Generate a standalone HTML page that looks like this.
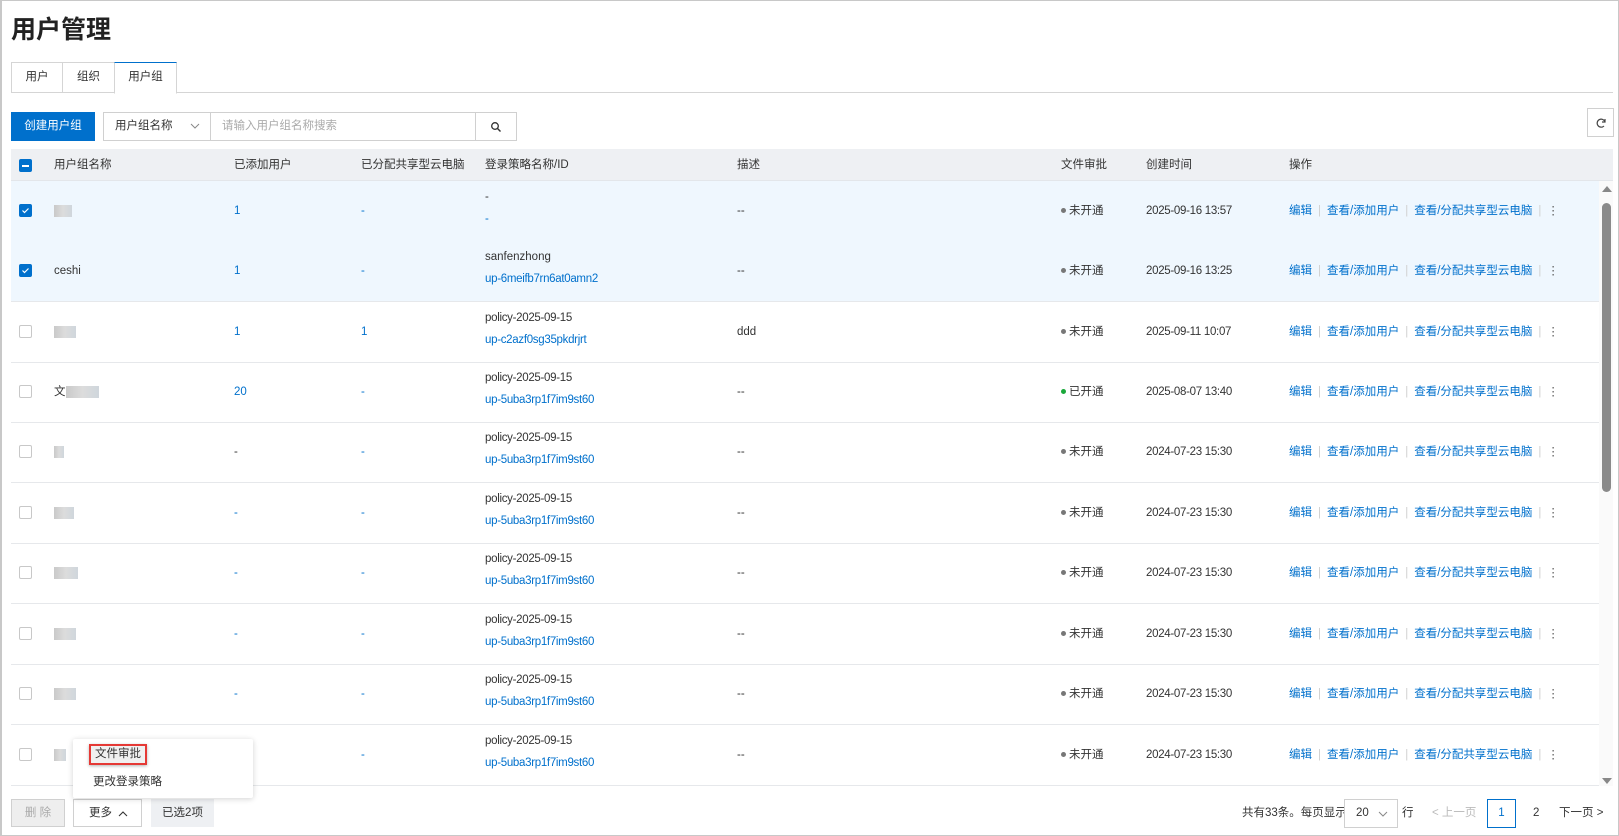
<!DOCTYPE html>
<html><head><meta charset="utf-8"><style>
*{box-sizing:border-box;margin:0;padding:0}
body{width:1619px;height:836px;overflow:hidden;background:#fff;font-family:"Liberation Sans","Noto Sans CJK SC",sans-serif;font-size:11.5px;color:#333;position:relative}
.frame{position:absolute;left:0;top:0;width:1619px;height:836px;border:1px solid #c8c8c8;border-left:2px solid #c8c8c8}
.a{position:absolute;white-space:nowrap;line-height:14px}
.title{left:11px;top:14px;font-size:25px;line-height:32px;font-weight:bold;color:#222}
.tab{position:absolute;top:62px;height:31px;border:1px solid #d5d5d5;line-height:29px;text-align:center;background:#fff}
.tabline{position:absolute;left:11px;right:6px;top:92px;height:1px;background:#d5d5d5}
.btn{position:absolute;border:1px solid #d0d0d0;line-height:26px;text-align:center;background:#fff}
.hdr{position:absolute;left:11px;top:149px;width:1602px;height:32px;background:#eef0f3;border-bottom:1px solid #e3e6ea}
.row{position:absolute;left:11px;width:1588px;height:61px;border-bottom:1px solid #e6e8eb}
.row.sel{background:#eff7fe}
.row .a{top:23px}
.d{letter-spacing:-0.3px}
.cb{position:absolute;left:8px;top:23px;width:13px;height:13px;border:1px solid #c8c8c8;border-radius:2px;background:#fff}
.cb.on{background:#0070cc;border-color:#0070cc}
.blue{color:#0070cc}
.blur{position:absolute;top:24px;height:12px;background:linear-gradient(90deg,#c9c9c9,#dcdcdc,#cfd6dc)}
.p1{top:9px!important}.p2{top:31px!important}
.dot{display:inline-block;width:5px;height:5px;border-radius:50%;background:#777;margin-right:3px;vertical-align:1px}
.sep{color:#d0d0d0;margin:0 6px}
</style></head><body>
<div class="frame"></div>
<div class="a title">用户管理</div>
<div class="tab" style="left:11px;width:52px">用户</div>
<div class="tab" style="left:62px;width:53px">组织</div>
<div class="tabline"></div>
<div class="tab" style="left:114px;width:63px;border-top:1px solid #0070cc;border-bottom-color:#fff;height:32px;z-index:2">用户组</div>

<div class="btn" style="left:11px;top:112px;width:84px;height:29px;background:#0070cc;border-color:#0070cc;color:#fff">创建用户组</div>
<div class="btn" style="left:103px;top:112px;width:108px;height:29px;text-align:left;padding-left:11px">用户组名称<svg style="position:absolute;left:86px;top:10px" width="10" height="7" viewBox="0 0 10 7"><path d="M1 1L5 5L9 1" fill="none" stroke="#888" stroke-width="1"/></svg></div>
<div class="btn" style="left:210px;top:112px;width:266px;height:29px;text-align:left;padding-left:11px;color:#aaa">请输入用户组名称搜索</div>
<div class="btn" style="left:475px;top:112px;width:42px;height:29px"><svg width="12" height="12" viewBox="0 0 12 12" style="margin-top:8px"><circle cx="5" cy="5" r="3.3" fill="none" stroke="#333" stroke-width="1.3"/><path d="M7.5 7.5L10.5 10.5" stroke="#333" stroke-width="1.4"/></svg></div>
<div class="btn" style="left:1587px;top:108px;width:27px;height:29px"><svg width="12" height="12" viewBox="0 0 12 12" style="margin-top:8px"><path d="M10 5A4 4 0 1 0 9 9" fill="none" stroke="#444" stroke-width="1.2"/><path d="M10 2V5H7" fill="none" stroke="#444" stroke-width="1.2"/></svg></div>

<div class="hdr">
<div class="cb on" style="top:10px"><div style="position:absolute;left:2px;top:5px;width:7px;height:2px;background:#fff"></div></div>
<div class="a" style="left:43px;top:9px">用户组名称</div>
<div class="a" style="left:223px;top:9px">已添加用户</div>
<div class="a" style="left:350px;top:9px">已分配共享型云电脑</div>
<div class="a" style="left:474px;top:9px">登录策略名称/ID</div>
<div class="a" style="left:726px;top:9px">描述</div>
<div class="a" style="left:1050px;top:9px">文件审批</div>
<div class="a" style="left:1135px;top:9px">创建时间</div>
<div class="a" style="left:1278px;top:9px">操作</div>
</div>

<div class="row sel" style="top:181px">
<div class="cb on"><svg width="11" height="11" viewBox="0 0 11 11"><path d="M2.5 5.5L4.5 7.5L8.5 3.5" fill="none" stroke="#fff" stroke-width="1.2"/></svg></div>
<div class="blur" style="left:43px;width:18px"></div>
<div class="a blue" style="left:223px">1</div><div class="a blue" style="left:350px">-</div>
<div class="a p1" style="left:474px">-</div><div class="a p2 blue" style="left:474px">-</div>
<div class="a" style="left:726px">--</div>
<div class="a" style="left:1050px"><span class="dot"></span>未开通</div>
<div class="a d" style="left:1135px">2025-09-16 13:57</div>
<div class="a blue" style="left:1278px">编辑<span class="sep">|</span>查看/添加用户<span class="sep">|</span>查看/分配共享型云电脑<span class="sep">|</span><span style="color:#555">⋮</span></div>
</div>
<div class="row sel" style="top:241px">
<div class="cb on"><svg width="11" height="11" viewBox="0 0 11 11"><path d="M2.5 5.5L4.5 7.5L8.5 3.5" fill="none" stroke="#fff" stroke-width="1.2"/></svg></div>
<div class="a" style="left:43px">ceshi</div>
<div class="a blue" style="left:223px">1</div><div class="a blue" style="left:350px">-</div>
<div class="a p1" style="left:474px">sanfenzhong</div><div class="a p2 blue d" style="left:474px">up-6meifb7rn6at0amn2</div>
<div class="a" style="left:726px">--</div>
<div class="a" style="left:1050px"><span class="dot"></span>未开通</div>
<div class="a d" style="left:1135px">2025-09-16 13:25</div>
<div class="a blue" style="left:1278px">编辑<span class="sep">|</span>查看/添加用户<span class="sep">|</span>查看/分配共享型云电脑<span class="sep">|</span><span style="color:#555">⋮</span></div>
</div>
<div class="row" style="top:302px">
<div class="cb"></div><div class="blur" style="left:43px;width:22px"></div>
<div class="a blue" style="left:223px">1</div><div class="a blue" style="left:350px">1</div>
<div class="a p1 d" style="left:474px">policy-2025-09-15</div><div class="a p2 blue d" style="left:474px">up-c2azf0sg35pkdrjrt</div>
<div class="a" style="left:726px">ddd</div>
<div class="a" style="left:1050px"><span class="dot"></span>未开通</div>
<div class="a d" style="left:1135px">2025-09-11 10:07</div>
<div class="a blue" style="left:1278px">编辑<span class="sep">|</span>查看/添加用户<span class="sep">|</span>查看/分配共享型云电脑<span class="sep">|</span><span style="color:#555">⋮</span></div>
</div>
<div class="row" style="top:362px">
<div class="cb"></div><div class="a" style="left:43px">文</div><div class="blur" style="left:55px;width:33px"></div>
<div class="a blue" style="left:223px">20</div><div class="a blue" style="left:350px">-</div>
<div class="a p1 d" style="left:474px">policy-2025-09-15</div><div class="a p2 blue d" style="left:474px">up-5uba3rp1f7im9st60</div>
<div class="a" style="left:726px">--</div>
<div class="a" style="left:1050px"><span class="dot" style="background:#1aa83a"></span>已开通</div>
<div class="a d" style="left:1135px">2025-08-07 13:40</div>
<div class="a blue" style="left:1278px">编辑<span class="sep">|</span>查看/添加用户<span class="sep">|</span>查看/分配共享型云电脑<span class="sep">|</span><span style="color:#555">⋮</span></div>
</div>
<div class="row" style="top:422px">
<div class="cb"></div><div class="blur" style="left:43px;width:10px"></div>
<div class="a" style="left:223px">-</div><div class="a blue" style="left:350px">-</div>
<div class="a p1 d" style="left:474px">policy-2025-09-15</div><div class="a p2 blue d" style="left:474px">up-5uba3rp1f7im9st60</div>
<div class="a" style="left:726px">--</div>
<div class="a" style="left:1050px"><span class="dot"></span>未开通</div>
<div class="a d" style="left:1135px">2024-07-23 15:30</div>
<div class="a blue" style="left:1278px">编辑<span class="sep">|</span>查看/添加用户<span class="sep">|</span>查看/分配共享型云电脑<span class="sep">|</span><span style="color:#555">⋮</span></div>
</div>
<div class="row" style="top:483px">
<div class="cb"></div><div class="blur" style="left:43px;width:20px"></div>
<div class="a blue" style="left:223px">-</div><div class="a blue" style="left:350px">-</div>
<div class="a p1 d" style="left:474px">policy-2025-09-15</div><div class="a p2 blue d" style="left:474px">up-5uba3rp1f7im9st60</div>
<div class="a" style="left:726px">--</div>
<div class="a" style="left:1050px"><span class="dot"></span>未开通</div>
<div class="a d" style="left:1135px">2024-07-23 15:30</div>
<div class="a blue" style="left:1278px">编辑<span class="sep">|</span>查看/添加用户<span class="sep">|</span>查看/分配共享型云电脑<span class="sep">|</span><span style="color:#555">⋮</span></div>
</div>
<div class="row" style="top:543px">
<div class="cb"></div><div class="blur" style="left:43px;width:24px"></div>
<div class="a blue" style="left:223px">-</div><div class="a blue" style="left:350px">-</div>
<div class="a p1 d" style="left:474px">policy-2025-09-15</div><div class="a p2 blue d" style="left:474px">up-5uba3rp1f7im9st60</div>
<div class="a" style="left:726px">--</div>
<div class="a" style="left:1050px"><span class="dot"></span>未开通</div>
<div class="a d" style="left:1135px">2024-07-23 15:30</div>
<div class="a blue" style="left:1278px">编辑<span class="sep">|</span>查看/添加用户<span class="sep">|</span>查看/分配共享型云电脑<span class="sep">|</span><span style="color:#555">⋮</span></div>
</div>
<div class="row" style="top:604px">
<div class="cb"></div><div class="blur" style="left:43px;width:22px"></div>
<div class="a blue" style="left:223px">-</div><div class="a blue" style="left:350px">-</div>
<div class="a p1 d" style="left:474px">policy-2025-09-15</div><div class="a p2 blue d" style="left:474px">up-5uba3rp1f7im9st60</div>
<div class="a" style="left:726px">--</div>
<div class="a" style="left:1050px"><span class="dot"></span>未开通</div>
<div class="a d" style="left:1135px">2024-07-23 15:30</div>
<div class="a blue" style="left:1278px">编辑<span class="sep">|</span>查看/添加用户<span class="sep">|</span>查看/分配共享型云电脑<span class="sep">|</span><span style="color:#555">⋮</span></div>
</div>
<div class="row" style="top:664px">
<div class="cb"></div><div class="blur" style="left:43px;width:22px"></div>
<div class="a blue" style="left:223px">-</div><div class="a blue" style="left:350px">-</div>
<div class="a p1 d" style="left:474px">policy-2025-09-15</div><div class="a p2 blue d" style="left:474px">up-5uba3rp1f7im9st60</div>
<div class="a" style="left:726px">--</div>
<div class="a" style="left:1050px"><span class="dot"></span>未开通</div>
<div class="a d" style="left:1135px">2024-07-23 15:30</div>
<div class="a blue" style="left:1278px">编辑<span class="sep">|</span>查看/添加用户<span class="sep">|</span>查看/分配共享型云电脑<span class="sep">|</span><span style="color:#555">⋮</span></div>
</div>
<div class="row" style="top:725px">
<div class="cb"></div><div class="blur" style="left:43px;width:12px"></div>
<div class="a blue" style="left:223px">-</div><div class="a blue" style="left:350px">-</div>
<div class="a p1 d" style="left:474px">policy-2025-09-15</div><div class="a p2 blue d" style="left:474px">up-5uba3rp1f7im9st60</div>
<div class="a" style="left:726px">--</div>
<div class="a" style="left:1050px"><span class="dot"></span>未开通</div>
<div class="a d" style="left:1135px">2024-07-23 15:30</div>
<div class="a blue" style="left:1278px">编辑<span class="sep">|</span>查看/添加用户<span class="sep">|</span>查看/分配共享型云电脑<span class="sep">|</span><span style="color:#555">⋮</span></div>
</div>

<div style="position:absolute;left:1599px;top:181px;width:14px;height:605px;background:#fafafa"></div>
<div class="a" style="left:1602px;top:186px;width:0;height:0;border-left:5px solid transparent;border-right:5px solid transparent;border-bottom:6px solid #888"></div>
<div style="position:absolute;left:1602px;top:203px;width:9px;height:289px;border-radius:5px;background:#8a8a8a"></div>
<div class="a" style="left:1602px;top:778px;width:0;height:0;border-left:5px solid transparent;border-right:5px solid transparent;border-top:6px solid #888"></div>

<div style="position:absolute;left:73px;top:739px;width:180px;height:59px;background:#fff;box-shadow:0 1px 6px rgba(0,0,0,.18);border-radius:2px;z-index:5">
<div class="a" style="left:16px;top:5px;width:58px;height:21px;border:2px solid #e53935;background:#f0f0f0;line-height:17px;padding-left:4px;box-shadow:0 1px 3px rgba(0,0,0,.3)">文件审批</div>
<div class="a" style="left:20px;top:36px">更改登录策略</div>
</div>

<div class="btn" style="left:11px;top:799px;width:54px;height:28px;background:#eee;color:#aaa">删 除</div>
<div class="btn" style="left:73px;top:799px;width:69px;height:28px;text-align:left;padding-left:15px">更多<svg style="position:absolute;left:44px;top:10px" width="10" height="7" viewBox="0 0 10 7"><path d="M1 6L5 2L9 6" fill="none" stroke="#333" stroke-width="1.1"/></svg></div>
<div class="btn" style="left:151px;top:799px;width:63px;height:28px;background:#eef0f3;border-color:#eef0f3">已选2项</div>
<div class="a" style="left:1242px;top:806px">共有33条。每页显示</div>
<div class="btn" style="left:1344px;top:799px;width:54px;height:29px;text-align:left;padding-left:11px">20<svg style="position:absolute;left:33px;top:11px" width="10" height="7" viewBox="0 0 10 7"><path d="M1 1L5 5L9 1" fill="none" stroke="#888" stroke-width="1"/></svg></div>
<div class="a" style="left:1402px;top:806px">行</div>
<div class="a" style="left:1432px;top:806px;color:#bbb">&lt; 上一页</div>
<div class="btn" style="left:1487px;top:799px;width:29px;height:29px;border-color:#0070cc;color:#0070cc">1</div>
<div class="a" style="left:1533px;top:806px">2</div>
<div class="a" style="left:1559px;top:806px">下一页 &gt;</div>
</body></html>
